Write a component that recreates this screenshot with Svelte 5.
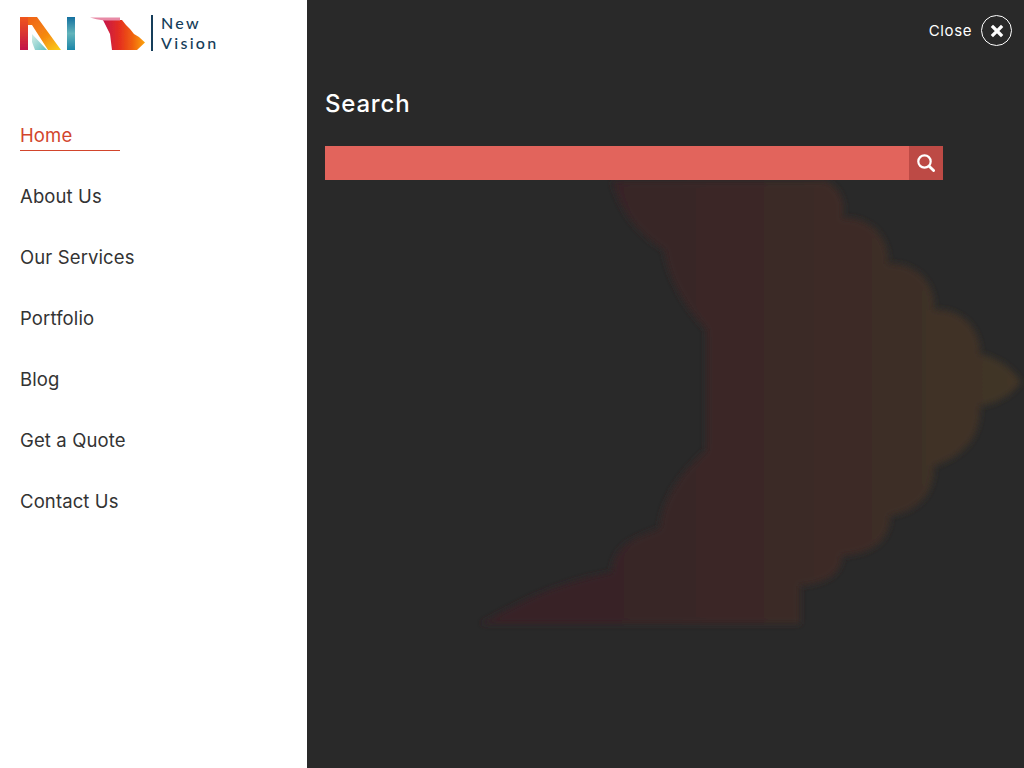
<script>
  const links = ["Home", "About Us", "Our Services", "Portfolio", "Blog", "Get a Quote", "Contact Us"];
</script>

<div class="page">
  <aside class="sidebar">
    <a class="logo" href="#top">
      <svg class="mark" width="128" height="36" viewBox="0 -1 128 36">
        <defs>
          <linearGradient id="nLeft" x1="0" y1="0" x2="0" y2="1">
            <stop offset="0" stop-color="#f0561c" />
            <stop offset="1" stop-color="#c2134a" />
          </linearGradient>
          <linearGradient id="nDiag" x1="0" y1="0" x2="1" y2="1">
            <stop offset="0" stop-color="#ee5a1a" />
            <stop offset="0.6" stop-color="#f58a10" />
            <stop offset="1" stop-color="#fbd21a" />
          </linearGradient>
          <linearGradient id="nRight" x1="0" y1="0" x2="0" y2="1">
            <stop offset="0" stop-color="#14709f" />
            <stop offset="0.5" stop-color="#62b4bb" />
            <stop offset="1" stop-color="#1d86a8" />
          </linearGradient>
          <linearGradient id="nInner" x1="0" y1="0" x2="1" y2="1">
            <stop offset="0" stop-color="#d8efe8" />
            <stop offset="1" stop-color="#5fbdc0" />
          </linearGradient>
          <linearGradient id="vFill" x1="0" y1="0" x2="1" y2="0">
            <stop offset="0" stop-color="#c5154c" />
            <stop offset="0.4" stop-color="#e5301f" />
            <stop offset="0.7" stop-color="#f0600f" />
            <stop offset="1" stop-color="#fba50c" />
          </linearGradient>
          <filter id="fuzz"><feGaussianBlur stdDeviation="0.5" /></filter>
        </defs>
        <g filter="url(#fuzz)">
          <path d="M0 1H17L41 34H28L12 9H8V34H0Z" fill="url(#nDiag)" />
          <rect x="0" y="1" width="8" height="33" fill="url(#nLeft)" />
          <path d="M12 18L27 34H15L12 26Z" fill="url(#nInner)" />
          <rect x="47" y="1" width="8" height="33" fill="url(#nRight)" />
          <path d="M83 4H102L106 9L110 13L114 18L119 21L125 26.5L117 34H92L90 18Z" fill="url(#vFill)" />
          <path d="M70 1.5H100V4.5H84Q76 3.5 70 1.5Z" fill="#e88aa6" />
        </g>
      </svg>
      <span class="rule"></span>
      <span class="brand">
        <span>New</span>
        <span>Vision</span>
      </span>
    </a>

    <nav>
      {#each links as link, i}
        <a class="link" class:active={i === 0} href="#top">{link}</a>
      {/each}
    </nav>
  </aside>

  <main class="panel">
    <svg class="decor" width="717" height="768" viewBox="307 0 717 768">
      <defs>
        <linearGradient id="decorFill" gradientUnits="userSpaceOnUse" x1="480" y1="0" x2="1020" y2="0">
          <stop offset="0" stop-color="#372128" />
          <stop offset="0.45" stop-color="#3a2727" />
          <stop offset="0.75" stop-color="#3d2d26" />
          <stop offset="1" stop-color="#423625" />
        </linearGradient>
        <filter id="soft"><feGaussianBlur stdDeviation="3" /></filter>
      </defs>
      <path
        filter="url(#soft)"
        fill="url(#decorFill)"
        d="M612 181H826A30 30 0 0 1 842 218A42 42 0 0 1 888 264A42 42 0 0 1 934 310A42 42 0 0 1 980 354Q1006 360 1021 382Q1006 402 980 406Q982 450 934 466Q934 508 890 516Q890 552 842 556Q842 582 800 586V624H480Q510 608 530 598Q570 580 612 572Q612 548 640 536L660 528Q662 490 706 450V330Q670 290 664 250Q624 226 612 181Z"
      />
    </svg>

    <header class="top">
      <span class="close-label">Close</span>
      <button class="close" aria-label="Close">
        <svg width="14" height="14" viewBox="0 0 14 14">
          <path d="M3 3L11 11M11 3L3 11" stroke="#fff" stroke-width="3.2" stroke-linecap="square" />
        </svg>
      </button>
    </header>

    <section class="search">
      <h2>Search</h2>
      <form class="field">
        <div class="input"></div>
        <button class="go" aria-label="Search">
          <svg width="18" height="18" viewBox="0 0 18 18">
            <circle cx="7.5" cy="7.5" r="6.2" fill="none" stroke="#fff" stroke-width="2.2" />
            <path d="M12.2 12.2L16.6 16.6" stroke="#fff" stroke-width="2.8" stroke-linecap="round" />
          </svg>
        </button>
      </form>
    </section>
  </main>
</div>

<style>
  :global(body) {
    margin: 0;
    font-family: "Inter", "Liberation Sans", sans-serif;
  }

  .page {
    display: flex;
    height: 768px;
    overflow: hidden;
  }

  .sidebar {
    width: 307px;
    flex: none;
    box-sizing: border-box;
    padding: 14px 20px 0;
    background: #fff;
  }

  .logo {
    display: flex;
    align-items: center;
    height: 37px;
    color: #153d5a;
    text-decoration: none;
  }

  .rule {
    width: 2px;
    height: 36px;
    margin-left: 3px;
    background: #153d5a;
  }

  .brand {
    display: flex;
    flex-direction: column;
    margin-left: 8px;
    font-family: "Lato", sans-serif;
    font-size: 16px;
    font-weight: 500;
    line-height: 19.5px;
    letter-spacing: 2.3px;
  }

  nav {
    display: flex;
    flex-direction: column;
    align-items: flex-start;
    gap: 30px;
    margin-top: 69px;
  }

  .link {
    font-size: 18.5px;
    line-height: 31px;
    letter-spacing: 0.12px;
    color: #333;
    text-decoration: none;
  }

  .link.active {
    box-sizing: border-box;
    width: 100px;
    height: 31px;
    color: #d2452c;
    border-bottom: 1px solid #d2452c;
  }

  .panel {
    position: relative;
    flex: 1;
    background: #292929;
    color: #fff;
  }

  .decor {
    position: absolute;
    inset: 0;
  }

  .top {
    position: relative;
    display: flex;
    justify-content: flex-end;
    align-items: center;
    gap: 9px;
    padding: 15px 12px 0 0;
    font-size: 15px;
  }

  .close-label {
    letter-spacing: 0.6px;
  }

  .close {
    display: flex;
    align-items: center;
    justify-content: center;
    width: 31px;
    height: 31px;
    padding: 0;
    border: 1px solid #fff;
    border-radius: 50%;
    background: none;
  }

  .search {
    position: relative;
    padding: 42px 0 0 18px;
  }

  h2 {
    margin: 0;
    font-size: 24px;
    font-weight: 500;
    line-height: 32px;
    letter-spacing: 0.8px;
  }

  .field {
    display: flex;
    width: 618px;
    height: 34px;
    margin-top: 26px;
  }

  .input {
    flex: 1;
    background: #e2645c;
  }

  .go {
    display: flex;
    align-items: center;
    justify-content: center;
    width: 34px;
    padding: 0;
    border: 0;
    background: #bd4a45;
  }
</style>
